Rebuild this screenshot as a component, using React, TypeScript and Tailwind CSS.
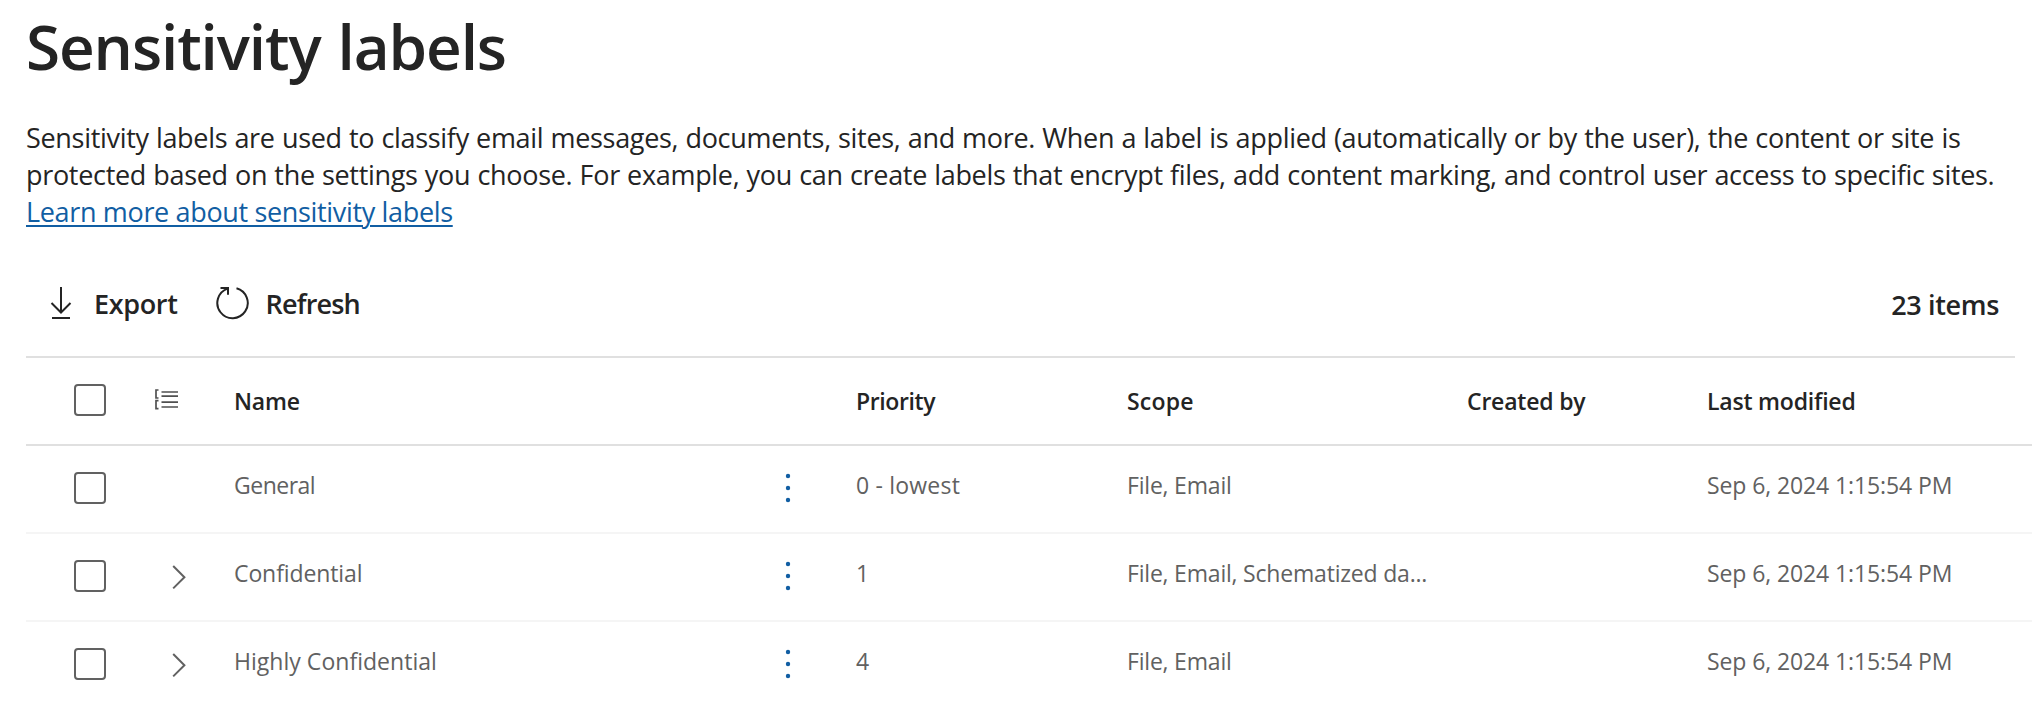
const rows = [
  { name: "General", nameTracking: "tracking-[-0.5px]", expandable: false, priority: "0 - lowest", priorityTracking: "tracking-[0.2px]", scope: "File, Email" },
  { name: "Confidential", nameTracking: "tracking-[-0.1px]", expandable: true, priority: "1", priorityTracking: "", scope: "File, Email, Schematized da..." },
  { name: "Highly Confidential", nameTracking: "tracking-[0.03px]", expandable: true, priority: "4", priorityTracking: "", scope: "File, Email" },
];

const columns = "grid grid-cols-[122px_86px_537px_85px_271px_340px_240px_1fr]";

function Checkbox() {
  return <span role="checkbox" aria-checked="false" className="ml-12 mt-[26px] block size-8 rounded-[4px] border-2 border-[#616161]" />;
}

function ExportIcon() {
  return (
    <svg className="block h-9 w-6" viewBox="0 0 24 36" fill="none" stroke="#242424" strokeWidth="2">
      <path d="M12 1v25M2.500 17l9.500 9.500 9.500-9.500M3 32h18" />
    </svg>
  );
}

function RefreshIcon() {
  return (
    <svg className="block size-9" viewBox="0 0 36 36" fill="none" stroke="#242424" strokeWidth="2">
      <path d="M21.500 2.300A15.200 15.200 0 1 1 12.600 2.600" />
      <path d="M5.500 2h7.500v6.800" />
    </svg>
  );
}

function GroupIcon() {
  return (
    <svg className="mt-[30px] ml-1.5 block size-6" viewBox="0 0 24 24" fill="none" stroke="#505050" strokeWidth="1.700">
      <path d="M7.500 4H24M7.500 8.200H24M7.500 14.200H24M7.500 19H24M4.500 2H2v8h2.500M4.500 12.700H2v8h2.500" />
    </svg>
  );
}

function Chevron() {
  return (
    <svg className="mt-[30px] ml-6 block h-[26px] w-4" viewBox="0 0 16 26" fill="none" stroke="#616161" strokeWidth="2">
      <path d="M1.200 2l11.200 11.200L1.200 24.400" />
    </svg>
  );
}

function MoreIcon() {
  return (
    <svg className="mt-[26px] ml-[13px] block h-8 w-2" viewBox="0 0 8 32" fill="#115ea3">
      <circle cx="4" cy="4" r="2.200" />
      <circle cx="4" cy="16" r="2.200" />
      <circle cx="4" cy="28" r="2.200" />
    </svg>
  );
}

export default function App() {
  return (
    <main className="h-[704px] w-full overflow-hidden bg-white pt-1.5 pl-[26px] font-['Open_Sans','Noto_Sans',sans-serif] text-[#242424]">
      <h1 className="h-[113px] text-[62px] leading-[80px] font-semibold tracking-[-1.1px] [word-spacing:2px]">Sensitivity labels</h1>
      <p className="h-[167px] text-[27px] leading-[37px] whitespace-nowrap">
        <span className="tracking-[-0.31px] [word-spacing:0.5px]">
          Sensitivity labels are used to classify email messages, documents, sites, and more. When a label is applied (automatically or by the user), the content or site is
          <br />
          protected based on the settings you choose. For example, you can create labels that encrypt files, add content marking, and control user access to specific sites.
        </span>
        <br />
        <a href="#" className="tracking-[-0.34px] text-[#115ea3] underline decoration-2 underline-offset-[3px]">Learn more about sensitivity labels</a>
      </p>
      <div className="flex h-[70px] items-start justify-between pr-[33px] text-[27px] leading-9 font-semibold">
        <div className="flex">
          <button className="flex pl-[23px]">
            <ExportIcon />
            <span className="ml-[21px] tracking-[-0.35px]">Export</span>
          </button>
          <button className="ml-[38px] flex">
            <RefreshIcon />
            <span className="ml-3.5 tracking-[-0.8px]">Refresh</span>
          </button>
        </div>
        <span className="pt-px tracking-[-0.35px]">23 items</span>
      </div>
      <div className="mr-[17px] h-0.5 bg-[#e0e0e0]" />
      <div className={`${columns} h-[88px] border-b-2 border-[#e0e0e0] text-[23px] leading-8 font-semibold`}>
        <Checkbox />
        <GroupIcon />
        <span className="pt-[27px] tracking-[-0.2px]">Name</span>
        <span />
        <span className="pt-[27px] tracking-[-0.4px]">Priority</span>
        <span className="pt-[27px] tracking-[0.2px]">Scope</span>
        <span className="pt-[27px] tracking-[-0.2px]">Created by</span>
        <span className="pt-[27px] tracking-[-0.2px]">Last modified</span>
      </div>
      {rows.map((row) => (
        <div key={row.name} className={`${columns} h-[88px] border-b-2 border-[#f5f5f5] text-[23px] leading-8 text-[#616161]`}>
          <Checkbox />
          <span>{row.expandable && <Chevron />}</span>
          <span className={`pt-[23px] ${row.nameTracking}`}>{row.name}</span>
          <MoreIcon />
          <span className={`pt-[23px] ${row.priorityTracking}`}>{row.priority}</span>
          <span className="pt-[23px] tracking-[-0.2px]">{row.scope}</span>
          <span />
          <span className="pt-[23px] tracking-[-0.1px]">Sep 6, 2024 1:15:54 PM</span>
        </div>
      ))}
    </main>
  );
}
